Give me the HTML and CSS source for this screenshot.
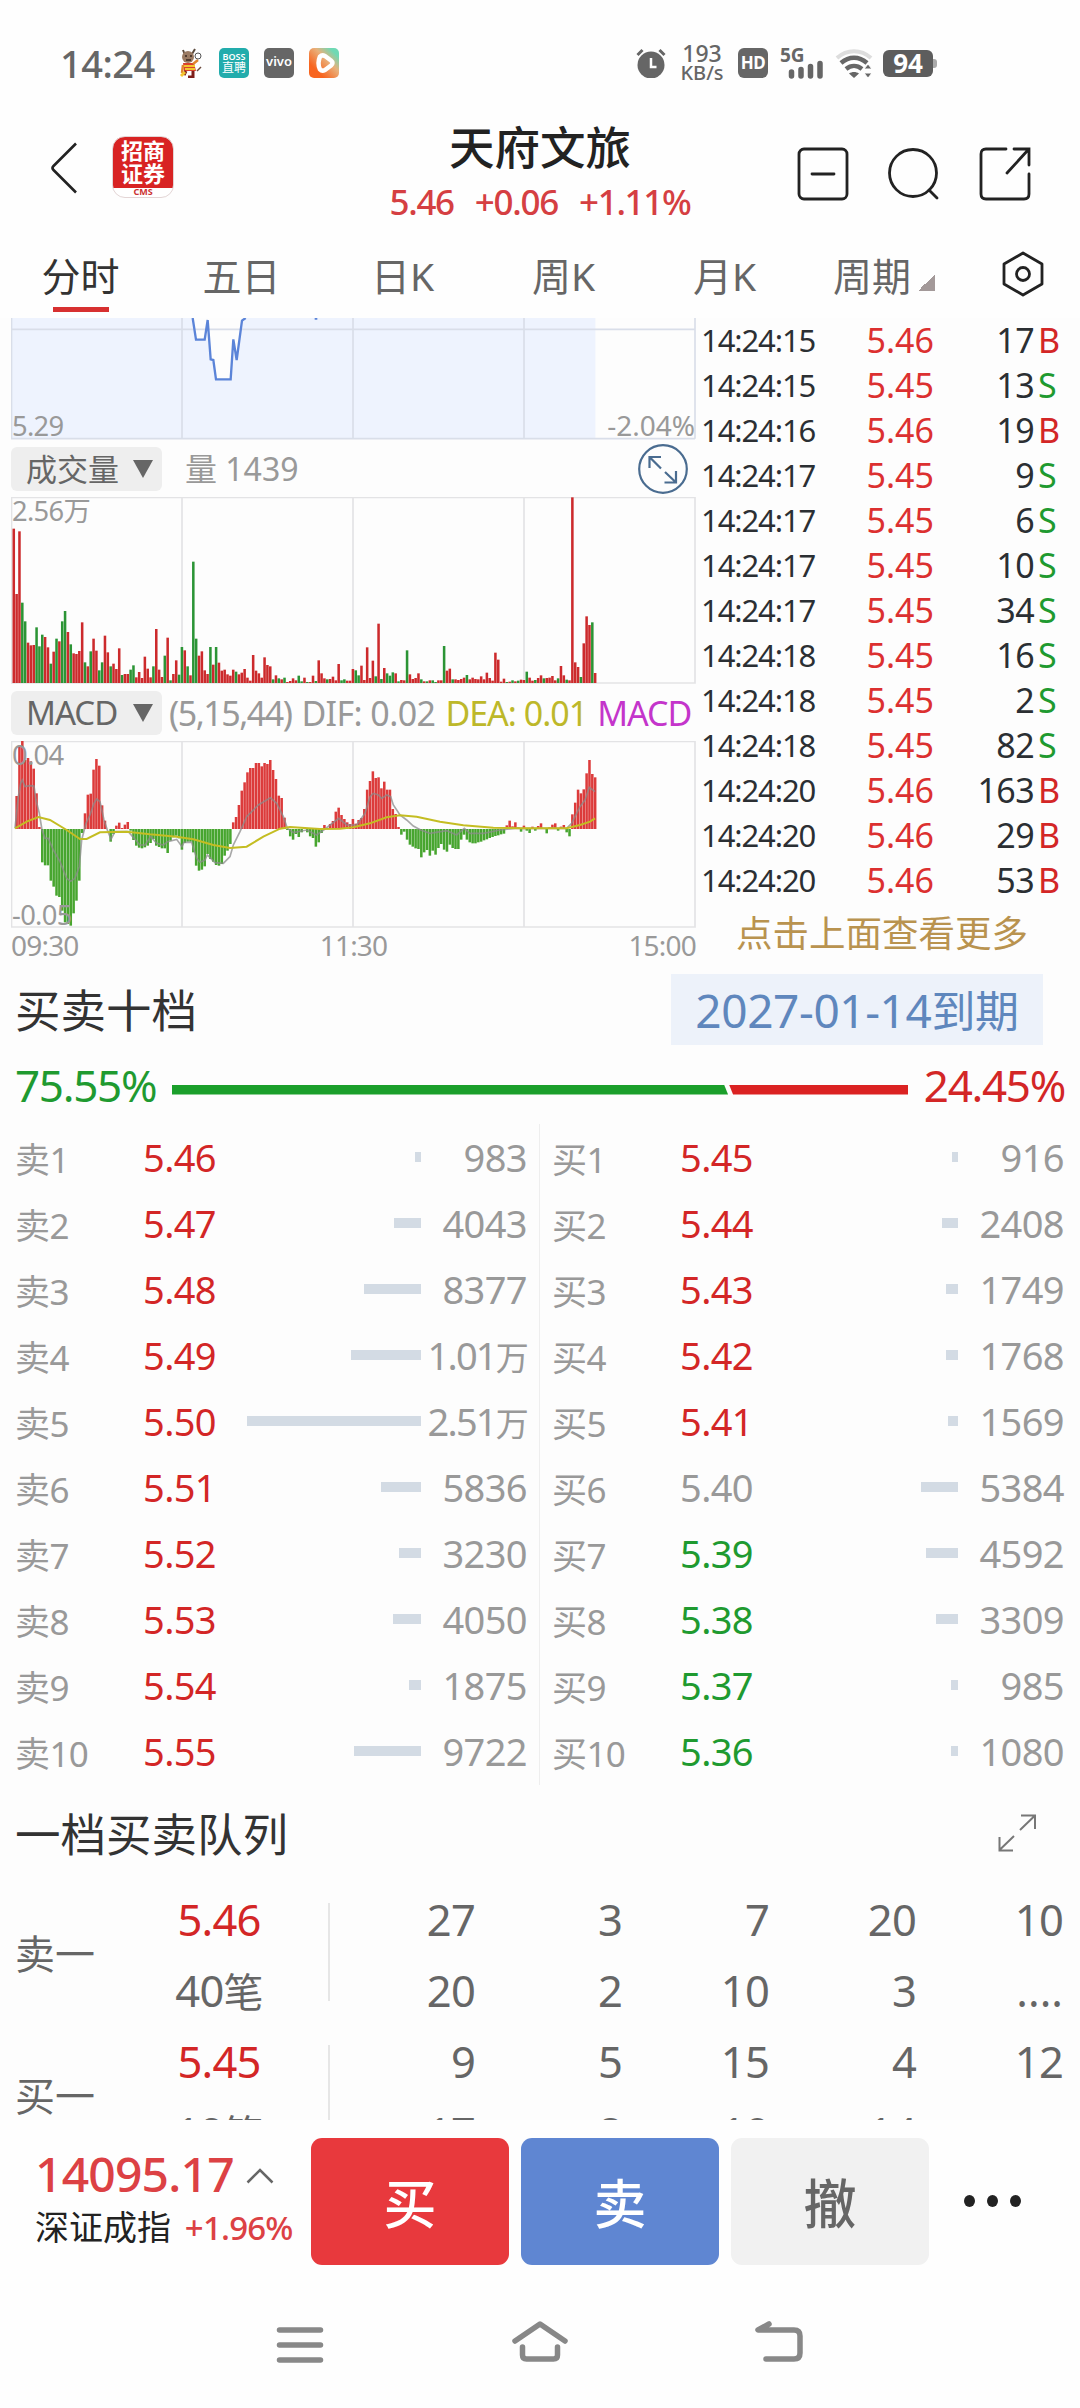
FILE: index.html
```html
<!DOCTYPE html>
<html lang="zh-CN">

<head>
    <meta charset="UTF-8">
    <meta name="viewport" content="width=device-width, initial-scale=1.0">
    <title>天府文旅 - 分时</title>
    <link rel="stylesheet" href="styles.css">
</head>

<body>
    <div class="status-bar">
        <span class="clock">14:24</span>
        <svg class="mascot" width="26" height="30" viewBox="0 0 26 30">
            <path d="M5 2l2 5M17 1l-3 5" stroke="#5b4a3c" stroke-width="2" fill="none" />
            <circle cx="10" cy="9" r="6" fill="#9a7a62" />
            <path d="M7 8h2M12 8h2M8 12h5" stroke="#3b2a20" stroke-width="1.5" />
            <path d="M5 15h11l2 8H6z" fill="#d9412b" />
            <path d="M6 18h11M7 21h10" stroke="#f3c52f" stroke-width="2" />
            <path d="M15 16l5-4M5 17l-1 8" stroke="#e0862e" stroke-width="2.5" />
            <circle cx="20" cy="8" r="3" fill="#fff" stroke="#555" />
            <path d="M8 23l-2 4M15 23v6h-5" stroke="#7d1f1a" stroke-width="3" fill="none" />
            <path d="M19 23l4-4" stroke="#6b4a3c" stroke-width="1.5" />
            <path d="M3 28l4-4" stroke="#f3c52f" stroke-width="3" />
        </svg>
        <span class="app-badge boss"><b>BOSS</b><i>直聘</i></span>
        <span class="app-badge vivo">vivo</span>
        <svg class="video" width="30" height="30" viewBox="0 0 30 30">
            <defs>
                <linearGradient id="video" x1="0" y1="1" x2="1" y2="0">
                    <stop offset="0.25" stop-color="#f8651f" />
                    <stop offset="0.6" stop-color="#e9b07a" />
                    <stop offset="0.85" stop-color="#6fd9b4" />
                </linearGradient>
            </defs>
            <rect width="30" height="30" rx="5" fill="url(#video)" />
            <path d="M11 8.500q2-2 5-.5l6 4.500q3 2.500 0 5l-6 4.500q-3 1.500-5-.5-3-6 0-13z" fill="none" stroke="#fff" stroke-width="4.500" stroke-linejoin="round" />
        </svg>
        <div class="status-right">
            <svg width="30" height="30" viewBox="0 0 30 30">
                <circle cx="15" cy="17" r="13.500" fill="#666" />
                <path d="M1.500 7l5-5M28.500 7l-5-5" stroke="#666" stroke-width="3" />
                <path d="M15 10v9h5.500" stroke="#fff" stroke-width="2.500" fill="none" />
            </svg>
            <span class="speed"><b>193</b><i>KB/s</i></span>
            <span class="hd">HD</span>
            <svg class="signal" width="48" height="32" viewBox="0 0 48 32">
                <text x="2" y="15">5G</text>
                <path d="M13.500 25v4M23 22.500v6.500M32.500 19.500v9.500M42 16.500v12.500" stroke="#666" stroke-width="5.500" stroke-linecap="round" />
            </svg>
            <svg width="38" height="32" viewBox="0 0 38 32">
                <path d="M2 11c10-9 24-9 34 0" stroke="#ddd" stroke-width="4" fill="none" />
                <path d="M6 16c8-7 18-7 26 0" stroke="#666" stroke-width="4.500" fill="none" />
                <path d="M11 22c5-4 11-4 16 0" stroke="#666" stroke-width="4.500" fill="none" />
                <path d="M19 31l-5-4.500c3-2 7-2 10 0z" fill="#666" />
                <path d="M33 17l4 5h-8zM33 31l4-5h-8z" fill="#666" stroke="#fff" stroke-width="1" />
            </svg>
            <span class="battery">94</span>
        </div>
    </div>

    <header>
        <div class="header-left">
            <svg width="28" height="52" viewBox="0 0 28 52">
                <path d="M26 1.500L3.500 24q-2 2 0 4L26 50.500" fill="none" stroke="#222" stroke-width="2.600" />
            </svg>
            <div class="broker">
                <p>招商<br>证券</p>
                <small>CMS</small>
            </div>
        </div>
        <div class="stock">
            <h1>天府文旅</h1>
            <p><span>5.46</span><span>+0.06</span><span>+1.11%</span></p>
        </div>
        <div class="header-right">
            <svg width="52" height="54" viewBox="0 0 52 54">
                <rect x="2" y="2" width="48" height="50" rx="5" />
                <path d="M15 27h22" />
            </svg>
            <svg width="52" height="54" viewBox="0 0 52 54">
                <circle cx="25" cy="26" r="23.500" />
                <path d="M41 43l8 8" />
            </svg>
            <svg width="52" height="54" viewBox="0 0 52 54">
                <path d="M27 2H7Q2 2 2 7v40q0 5 5 5h38q5 0 5-5V27M35 2h15v16M49 3L28 26" />
            </svg>
        </div>
    </header>

    <nav class="tabs">
        <a class="active">分时</a>
        <a>五日</a>
        <a>日K</a>
        <a>周K</a>
        <a>月K</a>
        <a class="period">周期</a>
        <svg width="44" height="46" viewBox="0 0 44 46">
            <path d="M22 2l19 11v20L22 44 3 33V13z" />
            <circle cx="22" cy="23" r="6.500" />
        </svg>
    </nav>

    <main>
        <section class="quote">
            <div class="charts">
                <svg class="chart price-chart" viewBox="0 0 2055 366">
                    <path class="area" d="M0 0H545L555 65H581L590 6 599 124 607 126 615 184H659L667 64 677 126 693 8 704 0H1753V362H0Z" />
                    <path class="grid" d="M1.500 0V362M513 0V362M1026 0V362M1539 0V362M2052 0V362M0 34H2052M0 362H2052" />
                    <path class="price-line" d="M545 0L555 65H581L590 6 599 124 607 126 615 184H659L667 64 677 126 693 8 704 0M911 2h8" />
                    <text x="3" y="353">5.29</text>
                    <text class="percent" x="2052" y="353" text-anchor="end">-2.04%</text>
                </svg>

                <div class="indicator">
                    <span class="picker">成交量<i></i></span>
                    <span class="vol">量 1439</span>
                    <svg class="zoom" width="50" height="50" viewBox="0 0 50 50">
                        <circle cx="25" cy="25" r="23.800" />
                        <path d="M11.500 24V13H23M12 13.500l11 11M38 27v11.500H26.500M37.500 38L27 28" />
                    </svg>
                </div>
                <svg class="chart volume-chart" viewBox="0 0 2055 561">
                    <path class="grid" d="M1.500 1.500H2052V558H1.500ZM513 0V558M1026 0V558M1539 0V558" />
                    <g id="volumeBars"></g>
                    <text x="3" y="73">2.56万</text>
                </svg>

                <div class="indicator">
                    <span class="picker latin">MACD<i></i></span>
                    <div class="params">
                        <span class="periods">(5,15,44)</span>
                        <span class="dif-value">DIF: 0.02</span>
                        <span class="dea-value">DEA: 0.01</span>
                        <span class="macd-value">MACD</span>
                    </div>
                </div>
                <svg class="chart macd-chart" viewBox="0 0 2055 561">
                    <path class="grid" d="M1.500 1.500H2052V558H1.500ZM513 0V558M1026 0V558M1539 0V558" />
                    <g id="macdBars"></g>
                    <g transform="translate(-33 -183)">
                        <polyline class="dif" points="45,445 55,350 62,310 67,300 75,320 90,317 102,318 108,360 118,400 126,450 135,475 145,475 160,510 180,545 200,595 212,604 225,595 238,560 245,480 258,430 270,405 282,370 290,357 300,365 312,420 322,450 333,478 345,455 385,455 398,470 420,495 435,495 452,470 470,490 490,495 503,485 530,478 546,500 552,487 575,487 590,535 600,547 615,540 622,525 645,548 670,550 690,530 700,495 720,455 740,410 775,375 811,353 830,370 850,410 862,445 880,458 920,450 950,465 975,447 1016,415 1040,435 1070,435 1095,400 1110,350 1120,340 1135,345 1145,355 1160,345 1172,350 1180,375 1200,405 1220,420 1240,438 1262,450 1290,460 1340,452 1370,465 1393,445 1410,460 1450,460 1500,450 1545,445 1700,445 1715,430 1740,380 1755,360 1768,322 1785,335" />
                        <polyline class="dea" points="45,445 80,425 115,411 150,420 200,450 240,477 260,477 300,457 380,455 450,463 530,470 580,478 640,495 690,504 740,500 790,470 840,446 870,441 960,447 1020,446 1060,442 1110,430 1160,412 1200,406 1250,410 1320,425 1390,436 1480,443 1560,445 1700,445 1740,435 1770,425 1785,415" />
                    </g>
                    <text x="3" y="72">0.04</text>
                    <text x="3" y="552">-0.05</text>
                </svg>
                <div class="times"><span>09:30</span><span>11:30</span><span>15:00</span></div>
            </div>

            <div class="ticks">
                <div class="tick"><time>14:24:15</time><b>5.46</b><span>17</span><i class="red">B</i></div>
                <div class="tick"><time>14:24:15</time><b>5.45</b><span>13</span><i class="green">S</i></div>
                <div class="tick"><time>14:24:16</time><b>5.46</b><span>19</span><i class="red">B</i></div>
                <div class="tick"><time>14:24:17</time><b>5.45</b><span>9</span><i class="green">S</i></div>
                <div class="tick"><time>14:24:17</time><b>5.45</b><span>6</span><i class="green">S</i></div>
                <div class="tick"><time>14:24:17</time><b>5.45</b><span>10</span><i class="green">S</i></div>
                <div class="tick"><time>14:24:17</time><b>5.45</b><span>34</span><i class="green">S</i></div>
                <div class="tick"><time>14:24:18</time><b>5.45</b><span>16</span><i class="green">S</i></div>
                <div class="tick"><time>14:24:18</time><b>5.45</b><span>2</span><i class="green">S</i></div>
                <div class="tick"><time>14:24:18</time><b>5.45</b><span>82</span><i class="green">S</i></div>
                <div class="tick"><time>14:24:20</time><b>5.46</b><span>163</span><i class="red">B</i></div>
                <div class="tick"><time>14:24:20</time><b>5.46</b><span>29</span><i class="red">B</i></div>
                <div class="tick"><time>14:24:20</time><b>5.46</b><span>53</span><i class="red">B</i></div>
                <p class="more">点击上面查看更多</p>
            </div>
        </section>

        <section class="depth">
            <div class="depth-head">
                <h2>买卖十档</h2>
                <span class="expire">2027-01-14<i>到期</i></span>
            </div>
            <div class="ratio">
                <span class="green">75.55%</span>
                <div class="ratio-bar"><div class="sell-part" style="width: 75.55%"></div><div class="buy-part"></div></div>
                <span class="red">24.45%</span>
            </div>
            <div class="levels">
                <div class="side">
                    <div class="level"><label>卖1</label><b class="red">5.46</b><u style="width: 6px"></u><span>983</span></div>
                    <div class="level"><label>卖2</label><b class="red">5.47</b><u style="width: 27px"></u><span>4043</span></div>
                    <div class="level"><label>卖3</label><b class="red">5.48</b><u style="width: 57px"></u><span>8377</span></div>
                    <div class="level"><label>卖4</label><b class="red">5.49</b><u style="width: 70px"></u><span class="wan">1.01<i>万</i></span></div>
                    <div class="level"><label>卖5</label><b class="red">5.50</b><u style="width: 174px"></u><span class="wan">2.51<i>万</i></span></div>
                    <div class="level"><label>卖6</label><b class="red">5.51</b><u style="width: 40px"></u><span>5836</span></div>
                    <div class="level"><label>卖7</label><b class="red">5.52</b><u style="width: 22px"></u><span>3230</span></div>
                    <div class="level"><label>卖8</label><b class="red">5.53</b><u style="width: 28px"></u><span>4050</span></div>
                    <div class="level"><label>卖9</label><b class="red">5.54</b><u style="width: 12px"></u><span>1875</span></div>
                    <div class="level"><label>卖10</label><b class="red">5.55</b><u style="width: 67px"></u><span>9722</span></div>
                </div>
                <div class="side">
                    <div class="level"><label>买1</label><b class="red">5.45</b><u style="width: 6px"></u><span>916</span></div>
                    <div class="level"><label>买2</label><b class="red">5.44</b><u style="width: 16px"></u><span>2408</span></div>
                    <div class="level"><label>买3</label><b class="red">5.43</b><u style="width: 12px"></u><span>1749</span></div>
                    <div class="level"><label>买4</label><b class="red">5.42</b><u style="width: 12px"></u><span>1768</span></div>
                    <div class="level"><label>买5</label><b class="red">5.41</b><u style="width: 10px"></u><span>1569</span></div>
                    <div class="level"><label>买6</label><b class="flat">5.40</b><u style="width: 37px"></u><span>5384</span></div>
                    <div class="level"><label>买7</label><b class="green">5.39</b><u style="width: 32px"></u><span>4592</span></div>
                    <div class="level"><label>买8</label><b class="green">5.38</b><u style="width: 22px"></u><span>3309</span></div>
                    <div class="level"><label>买9</label><b class="green">5.37</b><u style="width: 7px"></u><span>985</span></div>
                    <div class="level"><label>买10</label><b class="green">5.36</b><u style="width: 7px"></u><span>1080</span></div>
                </div>
            </div>
        </section>

        <section class="queue">
            <div class="queue-head">
                <h2>一档买卖队列</h2>
                <svg width="38" height="38" viewBox="0 0 38 38">
                    <path d="M22 16L36.500 2M23 1.500h14V15M16 22L1.500 36M1.500 23v13.500H15" />
                </svg>
            </div>
            <div class="queue-row">
                <label>卖一</label>
                <div class="queue-price"><b class="red">5.46</b><span>40<i>笔</i></span></div>
                <div class="orders">
                    <span>27</span><span>3</span><span>7</span><span>20</span><span>10</span>
                    <span>20</span><span>2</span><span>10</span><span>3</span><span class="dots">....</span>
                </div>
            </div>
            <div class="queue-row">
                <label>买一</label>
                <div class="queue-price"><b class="red">5.45</b><span>19<i>笔</i></span></div>
                <div class="orders">
                    <span>9</span><span>5</span><span>15</span><span>4</span><span>12</span>
                    <span>17</span><span>8</span><span>10</span><span>14</span>
                </div>
            </div>
        </section>
    </main>

    <footer>
        <div class="index">
            <div class="index-value">14095.17
                <svg width="28" height="16" viewBox="0 0 28 16"><path d="M1.500 14.500L14 2l12.500 12.500" /></svg>
            </div>
            <div class="index-name">深证成指 <b>+1.96%</b></div>
        </div>
        <button class="buy">买</button>
        <button class="sell">卖</button>
        <button class="cancel">撤</button>
        <div class="more-dots"><i></i><i></i><i></i></div>
    </footer>

    <div class="system-nav">
        <svg width="48" height="40" viewBox="0 0 48 40"><path d="M3.500 6h41M3.500 21h41M3.500 36h41" /></svg>
        <svg width="60" height="44" viewBox="0 0 60 44"><path d="M5 22L30 5l25 17M12.500 28v8q0 4 4 4h27q4 0 4-4v-8" /></svg>
        <svg width="52" height="44" viewBox="0 0 52 44"><path d="M16 5L5 11h36q6 0 6 6v17q0 6-6 6H13" /></svg>
    </div>

    <script src="script.js"></script>
</body>

</html>
```
FILE: styles.css
```css
* {
    box-sizing: border-box;
}

body {
    font-family: "Noto Sans", "Noto Sans CJK SC", sans-serif;
    width: 1080px;
    height: 2408px;
    margin: 0;
    overflow: hidden;
    background-color: #fefefe;
    color: #333;
}

h1,
h2,
p {
    margin: 0;
    font-weight: 400;
}

i {
    font-style: normal;
}

b {
    font-weight: 400;
}

u {
    text-decoration: none;
}

.red {
    color: #d32626;
}

.green {
    color: #1f9a30;
}

.flat {
    color: #999;
}

/* status bar */
.status-bar {
    display: flex;
    align-items: center;
    height: 126px;
    padding-left: 60px;
    color: #666;
}

.clock {
    width: 118px;
    font-size: 38px;
    font-weight: 500;
    letter-spacing: -0.5px;
}

.mascot {
    margin-right: 15px;
}

.app-badge {
    display: flex;
    flex-direction: column;
    align-items: center;
    justify-content: center;
    width: 30px;
    height: 30px;
    margin-right: 15px;
    border-radius: 5px;
    color: #fff;
    line-height: 1;
}

.boss {
    background-color: #22acac;
}

.boss b {
    font-size: 9px;
    font-weight: 600;
}

.boss i {
    font-size: 12px;
    line-height: 14px;
}

.vivo {
    padding-bottom: 3px;
    background-color: #666;
    font-size: 13px;
    font-weight: 600;
}

.status-right {
    display: flex;
    align-items: center;
    margin-left: 297px;
}

.speed {
    display: flex;
    flex-direction: column;
    align-items: center;
    width: 72px;
    line-height: 20px;
}

.speed b {
    font-size: 23px;
    font-weight: 500;
}

.speed i {
    font-size: 20px;
    font-weight: 500;
}

.hd {
    width: 30px;
    height: 30px;
    margin-right: 10px;
    border-radius: 6px;
    background-color: #666;
    color: #fff;
    font-size: 17px;
    font-weight: 700;
    line-height: 29px;
    text-align: center;
    letter-spacing: -0.5px;
}

.signal {
    margin-right: 9px;
    overflow: visible;
}

.signal text {
    font-size: 19px;
    font-weight: 700;
    fill: #666;
}

.battery {
    position: relative;
    width: 50px;
    height: 27px;
    margin-left: 10px;
    border-radius: 6px;
    background-color: #5d5d5d;
    color: #fff;
    font-size: 26px;
    font-weight: 700;
    line-height: 27px;
    text-align: center;
}

.battery::after {
    content: "";
    position: absolute;
    top: 9px;
    right: -4px;
    width: 4px;
    height: 9px;
    border-radius: 0 3px 3px 0;
    background-color: #aaa;
}

/* header */
header {
    display: grid;
    grid-template-columns: 300px 480px 300px;
    height: 114px;
}

.header-left {
    display: flex;
    padding: 10px 0 0 50px;
}

.header-left > svg {
    margin-top: 6px;
}

.broker {
    width: 62px;
    height: 62px;
    margin-left: 34px;
    border: 1px solid #e3d5d5;
    border-radius: 13px;
    background: linear-gradient(#d82323 51px, #fff 51px);
    text-align: center;
}

.broker p {
    padding-top: 2px;
    color: #fff;
    font-size: 22px;
    font-weight: 700;
    line-height: 23px;
}

.broker small {
    display: block;
    margin-top: 2px;
    color: #c33;
    font-size: 9px;
    font-weight: 700;
    line-height: 10px;
}

.stock {
    text-align: center;
}

.stock h1 {
    height: 46px;
    color: #222;
    font-size: 45.5px;
    font-weight: 500;
    line-height: 43px;
}

.stock p {
    display: flex;
    justify-content: center;
    gap: 21px;
    color: #d53f42;
    font-size: 35px;
    font-weight: 500;
    line-height: 59px;
    letter-spacing: -1.3px;
}

.header-right {
    display: flex;
    gap: 39px;
    padding: 21px 0 0 17px;
}

.header-right svg {
    fill: none;
    stroke: #222;
    stroke-width: 2.8;
    stroke-linecap: round;
}

/* tabs */
.tabs {
    display: grid;
    grid-template-columns: 161px 161px 161px 161px 161px 175px 100px;
    height: 78px;
    color: #666;
    font-size: 39px;
    line-height: 72px;
    text-align: center;
}

.tabs .active {
    color: #333;
}

.tabs .active::after {
    content: "";
    display: block;
    width: 56px;
    height: 5px;
    margin: -5px auto 0;
    background-color: #d73030;
}

.period {
    display: flex;
    align-items: flex-start;
    gap: 7px;
    padding-left: 28px;
}

.period::after {
    content: "";
    width: 17px;
    height: 17px;
    margin-top: 34px;
    background: linear-gradient(135deg, transparent 50%, #a39999 50%);
}

.tabs svg {
    margin: 11px 0 0 21px;
    fill: none;
    stroke: #222;
    stroke-width: 2.8;
    stroke-linejoin: round;
}

/* scrolled content, cut off by the trade bar */
main {
    height: 1802px;
    overflow: hidden;
    background-color: #fdfdfd;
}

.quote {
    display: flex;
    height: 644px;
}

.charts {
    width: 685px;
    margin-left: 11px;
}

.chart {
    display: block;
    width: 685px;
}

.price-chart {
    height: 122px;
}

.volume-chart,
.macd-chart {
    height: 187px;
}

.chart text {
    fill: #999;
    font-size: 82px;
    letter-spacing: -2px;
}

.chart .percent {
    font-size: 84px;
    letter-spacing: 0;
}

.grid {
    fill: none;
    stroke: #e3e3e5;
    stroke-width: 5;
}

.price-chart .grid {
    stroke: #d9dee9;
}

.area {
    fill: #eef3fe;
}

.price-line {
    fill: none;
    stroke: #5b84d8;
    stroke-width: 7;
}

.bar-up {
    fill: #cc2a2c;
}

.bar-down {
    fill: #2b9435;
}

.macd-chart .bar-up {
    fill: #dc3b3b;
}

.macd-chart .bar-down {
    fill: #47a52f;
}

.dif {
    fill: none;
    stroke: #8b8b8b;
    stroke-width: 5;
    opacity: 0.75;
}

.dea {
    fill: none;
    stroke: #c4bd22;
    stroke-width: 6;
}

.indicator {
    display: flex;
    align-items: center;
    height: 57px;
    padding-top: 1px;
    color: #999;
    line-height: 44px;
}

.picker {
    display: flex;
    align-items: center;
    justify-content: space-between;
    width: 151px;
    height: 44px;
    padding: 0 9px 0 15px;
    border-radius: 6px;
    background-color: #eee;
    color: #666;
    font-size: 31px;
}

.picker.latin {
    font-size: 33px;
    letter-spacing: -1px;
}

.picker i {
    border: 10px solid transparent;
    border-top: 18px solid #666;
    border-bottom: 0;
}

.vol {
    margin-left: 23px;
    font-size: 32px;
}

.zoom {
    margin-left: auto;
    margin-right: 8px;
    fill: none;
    stroke: #4a6c90;
    stroke-width: 2.2;
}

.params {
    display: flex;
    gap: 10px;
    margin-left: 7px;
    white-space: nowrap;
    font-size: 34px;
    letter-spacing: -1px;
}

.periods {
    letter-spacing: -1.5px;
}

.dif-value {
    letter-spacing: -0.6px;
}

.dea-value {
    color: #bdb82a;
}

.macd-value {
    color: #c435cb;
}

.times {
    display: flex;
    justify-content: space-between;
    color: #999;
    font-size: 28px;
    line-height: 34px;
    letter-spacing: -0.8px;
}

.ticks {
    width: 384px;
    padding: 0 20px 0 5px;
}

.tick {
    display: grid;
    grid-template-columns: 133px 100px 100px 26px;
    height: 45px;
    color: #2b2f33;
    font-size: 34px;
    line-height: 44px;
    text-align: right;
    letter-spacing: -0.6px;
}

.tick time {
    font-size: 31px;
    letter-spacing: -1.1px;
    text-align: left;
}

.tick b {
    color: #dc3030;
    letter-spacing: 0;
}

.tick i {
    padding-left: 4px;
    text-align: left;
}

.more {
    padding-left: 3px;
    color: #b9934f;
    font-size: 36.5px;
    line-height: 60px;
    text-align: center;
    white-space: nowrap;
}

/* ten level depth */
.depth {
    height: 824px;
}

.depth-head {
    display: flex;
    justify-content: space-between;
    padding: 12px 37px 0 15px;
}

h2 {
    color: #333;
    font-size: 45.5px;
    line-height: 72px;
}

.expire {
    width: 372px;
    height: 71px;
    background-color: #edf2fa;
    color: #5f87bd;
    font-size: 46px;
    line-height: 73px;
    text-align: center;
    letter-spacing: -0.4px;
}

.expire i {
    font-size: 44px;
}

.ratio {
    display: flex;
    align-items: center;
    justify-content: space-between;
    height: 78px;
    padding: 0 15px;
    font-size: 44px;
    letter-spacing: -1.3px;
}

.ratio-bar {
    display: flex;
    gap: 1px;
    width: 736px;
    height: 10px;
    margin-top: 9px;
}

.sell-part {
    background-color: #1b9f2b;
    clip-path: polygon(0 0, calc(100% - 4px) 0, 100% 100%, 0 100%);
}

.buy-part {
    flex: 1;
    background-color: #db2222;
    clip-path: polygon(0 0, 100% 0, 100% 100%, 4px 100%);
}

.levels {
    display: flex;
    height: 661px;
}

.side {
    width: 540px;
}

.side:first-child {
    border-right: 1px solid #eee;
}

.level {
    display: flex;
    align-items: center;
    height: 66px;
    padding-left: 15px;
    color: #999;
    font-size: 38px;
    letter-spacing: -0.6px;
}

.side:last-child .level {
    padding-left: 12px;
}

.level label {
    width: 86px;
    font-size: 35px;
}

.level b {
    width: 115px;
    text-align: right;
}

.level u {
    height: 10px;
    margin-left: auto;
    background-color: #d3dbe4;
}

.level span {
    width: 106px;
    text-align: right;
    white-space: nowrap;
}

.level .wan {
    letter-spacing: -1.8px;
}

.side:first-child .level {
    padding-right: 12px;
}

.side:last-child .level {
    padding-right: 16px;
}

.level i {
    font-size: 33px;
}

/* first level order queue */
.queue-head {
    display: flex;
    justify-content: space-between;
    height: 98px;
    padding: 12px 44px 0 15px;
}

.queue-head svg {
    margin-top: 16px;
    fill: none;
    stroke: #777;
    stroke-width: 2;
}

.queue-row {
    display: flex;
    height: 142px;
    color: #666;
    font-size: 43.5px;
    line-height: 71px;
}

.queue-row label {
    width: 110px;
    padding-left: 15px;
    font-size: 40px;
    line-height: 140px;
}

.queue-price {
    display: flex;
    flex-direction: column;
    width: 218px;
    text-align: center;
}

.queue-price i {
    font-size: 40px;
}

.queue-row b,
.queue-row span {
    height: 71px;
    letter-spacing: -0.8px;
}

.orders {
    display: grid;
    grid-template-columns: repeat(5, 147px);
    text-align: right;
    background: linear-gradient(#e6e6e6, #e6e6e6) 0 19px / 2px 98px no-repeat;
}

.orders .dots {
    letter-spacing: 0;
}

/* trade bar */
footer {
    display: flex;
    gap: 12px;
    height: 150px;
    padding: 18px 0 0 35px;
}

.index {
    width: 264px;
    white-space: nowrap;
}

.index-value {
    color: #dc4144;
    font-size: 48px;
    font-weight: 500;
    line-height: 72px;
    letter-spacing: -0.8px;
}

.index-value svg {
    margin-bottom: 8px;
    fill: none;
    stroke: #666;
    stroke-width: 2.5;
}

.index-name {
    color: #222;
    font-size: 34px;
    line-height: 34px;
}

.index-name b {
    margin-left: 5px;
    color: #dc4144;
    font-size: 33px;
    font-weight: 500;
    letter-spacing: -0.8px;
}

button {
    width: 198px;
    height: 127px;
    padding: 0;
    border: none;
    border-radius: 11px;
    color: #fff;
    font-family: inherit;
    font-size: 53px;
    font-weight: 500;
}

.buy {
    background-color: #e8393d;
}

.sell {
    background-color: #5f86d2;
}

.cancel {
    background-color: #f1f1f1;
    color: #666;
}

.more-dots {
    display: flex;
    gap: 12px;
    padding: 57px 0 0 23px;
}

.more-dots i {
    width: 11px;
    height: 12px;
    border-radius: 50%;
    background-color: #222;
}

/* android navigation */
.system-nav {
    display: flex;
    gap: 186px;
    padding: 54px 0 0 276px;
}

.system-nav svg {
    fill: none;
    stroke: #888;
    stroke-width: 5.5;
    stroke-linecap: round;
    stroke-linejoin: round;
}

.system-nav svg:nth-child(2) {
    margin-top: -5px;
}

.system-nav svg:nth-child(3) {
    margin: -5px 0 0 -3px;
}
```
FILE: script.js
```js
const STEP = 8.55; // one minute on the time axis

// volume per minute, negative = falling minute
const volumes = [
    463, 267, 455, -241, -185, 121, 113, 114, -167, -110, -145, 138, 107, -58, 94, -133, 125, -185, -216, 153,
    -116, 89, 87, 96, 182, -62, 50, -95, 133, 97, -38, -62, 142, 92, -50, 58, 42, 104, -24, 27,
    27, -40, -53, 17, 33, 15, 79, 43, 17, -50, 162, 40, 18, -82, 136, -8, 27, 68, -25, -108,
    98, -50, 23, -364, -133, 82, 95, 38, 27, -108, 55, -108, 61, 37, 40, 26, 22, 40, -34, 26,
    31, 42, 16, 7, 84, 37, 29, 16, 77, 54, 50, -11, 23, -14, 11, -16, 3, 6, 14, 8,
    -22, -5, 16, -3, 3, 22, -6, 68, 29, 14, -11, 12, 19, 8, 57, -8, -11, 7, 7, 42,
    -38, -23, 52, 9, 107, 15, 67, -20, 178, -12, 45, -29, -22, -32, 29, -5, 9, 8, -98, 26,
    12, 15, 29, -11, 5, -5, 8, -8, -3, 8, 8, -111, 37, 43, -11, 11, 9, 12, 16, -24,
    11, 16, 12, 11, 20, 11, 31, 15, 7, 91, 70, 4, 13, -3, 4, -8, 5, -7, 10, 9,
    -34, 16, 7, -9, 15, 23, -14, 15, 16, 21, 8, -14, 51, 23, -10, 8, 557, 62, 48, -18,
    119, 200, 174, -182, 30
];

const macd = [
    0, 99, 250, 264, 207, 213, 203, 181, 107, 6, -100, -109, -109, -155, -173, -200, -204, -245, -280, -285,
    -290, -253, -215, -155, -12, 47, 103, 106, 178, 210, 190, 71, 25, 0, -38, -15, 10, 19, 3, 13,
    21, -5, -33, -50, -56, -58, -55, -50, -42, -30, -50, -54, -58, -58, -72, -35, -25, -20, -28, -62,
    -42, -38, -38, -70, -110, -125, -122, -112, -75, -90, -98, -108, -110, -105, -80, -65, -45, 20, 36, 72,
    115, 140, 170, 183, 183, 198, 198, 188, 198, 195, 207, 177, 150, 100, 93, 34, -3, -22, -32, -15,
    -24, -10, 4, -10, -22, -27, -53, -40, -12, 12, 3, 15, 24, 52, 64, 42, 30, 20, 15, 30,
    16, 27, 33, 60, 118, 144, 173, 153, 155, 122, 142, 118, 118, 60, 45, 6, -17, -8, -32, -47,
    -53, -58, -60, -85, -70, -63, -80, -65, -77, -57, -45, -62, -68, -47, -57, -60, -60, -32, -17, -32,
    -40, -43, -43, -40, -38, -34, -31, -27, -24, -21, -19, -16, -14, 11, 25, 8, 20, 5, -8, 10,
    -5, -12, 7, -5, 9, 17, 3, -13, 5, 13, 17, -5, 7, 12, -10, -22, 44, 79, 118, 107,
    119, 167, 207, 165, 155
];

function addBar(group, index, y, height, up) {
    const rect = document.createElementNS('http://www.w3.org/2000/svg', 'rect');
    rect.setAttribute('x', 4.5 + index * STEP);
    rect.setAttribute('y', y);
    rect.setAttribute('width', 7.6);
    rect.setAttribute('height', height);
    rect.setAttribute('class', up ? 'bar-up' : 'bar-down');
    group.appendChild(rect);
}

const volumeBars = document.getElementById('volumeBars');
volumes.forEach((v, i) => addBar(volumeBars, i, 558 - Math.abs(v), Math.abs(v), v > 0));

const macdBars = document.getElementById('macdBars');
macd.forEach((v, i) => addBar(macdBars, i, v > 0 ? 264 - v : 264, Math.abs(v), v > 0));
```
